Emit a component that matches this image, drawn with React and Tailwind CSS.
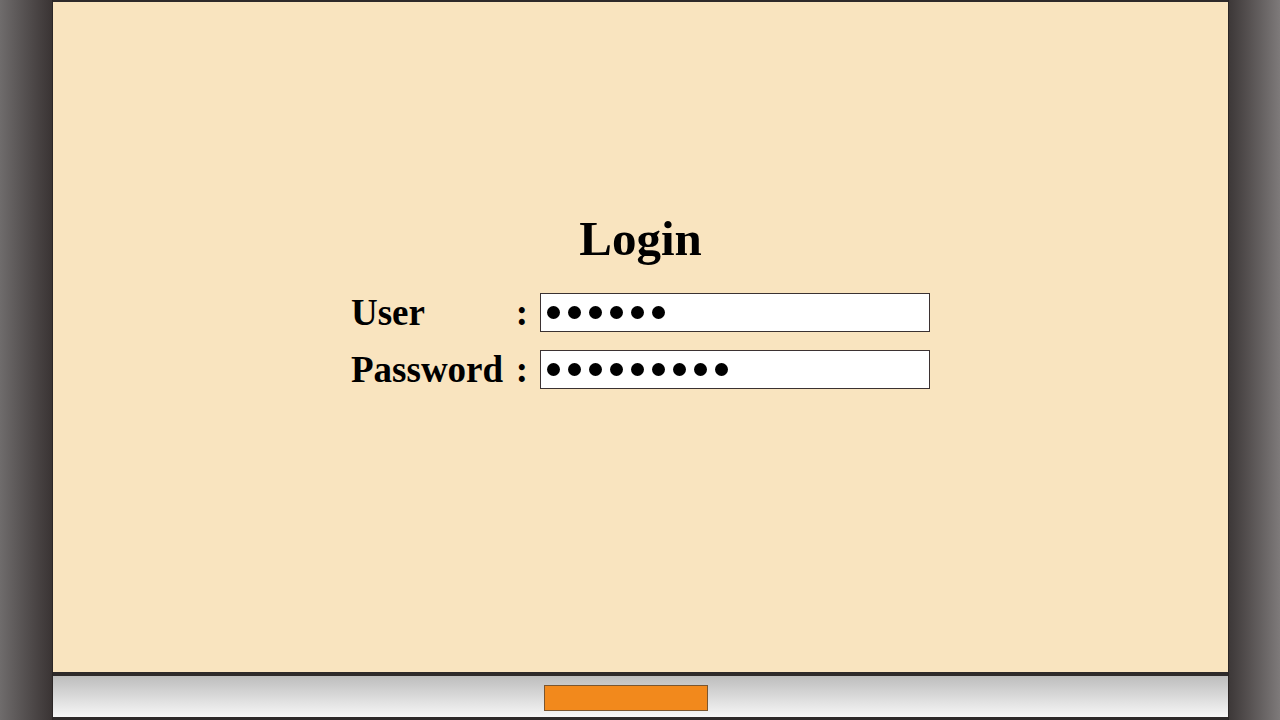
import React from 'react';

const Dots = ({ count }) => (
    <div className="flex items-center gap-[8px] pl-[6px]">
        {Array.from({ length: count }).map((_, i) => (
            <span key={i} className="block h-[13px] w-[13px] rounded-full bg-black" />
        ))}
    </div>
);

const Field = ({ label, count }) => (
    <div className="flex items-center">
        <span className="w-[160px] text-[37px] leading-[37px] font-bold text-black">{label}</span>
        <span className="w-[22px] text-center text-[37px] leading-[37px] font-bold text-black">:</span>
        <div className="ml-[7px] flex h-[39px] w-[390px] items-center border-[1.5px] border-[#3b3232] bg-white">
            <Dots count={count} />
        </div>
    </div>
);

export default function App() {
    return (
        <div
            className="flex h-[720px] w-[1280px] overflow-hidden bg-[#2e2a2a]"
            style={{ fontFamily: '"Liberation Serif", "Times New Roman", serif' }}
        >
            {/* left bezel */}
            <div className="w-[52px] bg-gradient-to-r from-[#6f6c6c] to-[#3a3434]" />

            {/* screen */}
            <div className="flex flex-1 flex-col border-x border-[#2b2626] pt-[2px]">
                <div className="flex flex-1 flex-col items-center bg-[#f9e4bf] pt-[213px]">
                    <h1 className="text-[49px] leading-[48px] font-bold text-black">Login</h1>
                    <div className="mt-[30px] flex flex-col gap-[18px]">
                        <Field label="User" count={6} />
                        <Field label="Password" count={9} />
                    </div>
                </div>
                <div className="h-[4px] bg-[#2e2a2a]" />
                <div className="flex h-[41px] items-start bg-gradient-to-b from-[#bdbdbd] to-[#f7f7f7] pl-[491px] pt-[9px]">
                    <div className="h-[26px] w-[164px] border border-[#7a5630] bg-[#f2891c]" />
                </div>
                <div className="h-[3px] bg-[#2e2a2a]" />
            </div>

            {/* right bezel */}
            <div className="w-[51px] bg-gradient-to-r from-[#3d3838] to-[#7e7a7a]" />
        </div>
    );
}
